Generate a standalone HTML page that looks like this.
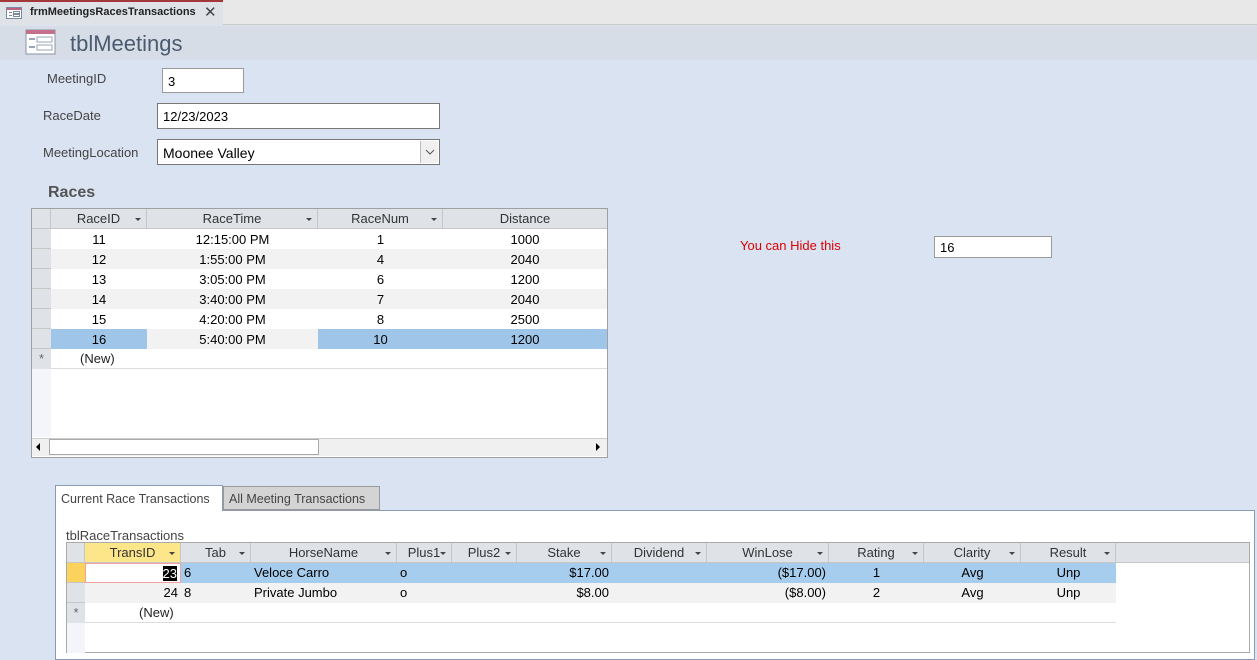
<!DOCTYPE html>
<html><head><style>
*{margin:0;padding:0;box-sizing:border-box}
body{width:1257px;height:653px;overflow:hidden;background:#dae3f2;font-family:"Liberation Sans",sans-serif;font-size:13px;color:#222;position:relative}
.a{position:absolute;white-space:nowrap}
.lbl{color:#444;font-size:13px}
.box{background:#fff;border:1px solid #9a9a9a;padding:3px 5px;font-size:13px;color:#000}
.c{position:absolute;white-space:nowrap;overflow:hidden;height:20px;line-height:20px;font-size:13px}
.h{background:#dfe3e8;border-right:1px solid #c6c6c6;border-bottom:1px solid #c6c6c6;text-align:center;color:#333}
.dd{position:absolute;right:5px;top:9px;border-left:3px solid transparent;border-right:3px solid transparent;border-top:3px solid #444}
.sel{background:#dfe3e8;border-bottom:1px solid #c6c6c6}
</style></head><body>
<div class="a" style="left:0;top:0;width:1257px;height:25px;background:#e8e8e8;border-bottom:1px solid #c8c8c8"></div>
<div class="a" style="left:0;top:0;width:223px;height:25px;background:#dfe3e8;border-top:2px solid #a4373a"></div>
<svg class="a" style="left:6px;top:7px" width="16" height="12"><rect x="0.5" y="0.5" width="15" height="11" fill="#fff" stroke="#7a8aa0"/><rect x="1" y="1" width="14" height="2" fill="#c06080"/><line x1="3" y1="5.5" x2="6" y2="5.5" stroke="#7a8aa0"/><rect x="7.5" y="4.5" width="6" height="2" fill="none" stroke="#7a8aa0"/><line x1="3" y1="8.5" x2="6" y2="8.5" stroke="#7a8aa0"/><rect x="7.5" y="7.5" width="6" height="2" fill="none" stroke="#7a8aa0"/></svg>
<div class="a" style="left:30px;top:6px;font-size:11px;font-weight:bold;color:#222">frmMeetingsRacesTransactions</div>
<div class="a" style="left:204px;top:3px;font-size:15px;color:#444">✕</div>
<div class="a" style="left:0;top:26px;width:1257px;height:34px;background:#d6dde7"></div>
<svg class="a" style="left:25px;top:29px" width="32" height="27"><rect x="1" y="1" width="29" height="24" fill="#fff" stroke="#8894a6"/><rect x="1" y="1" width="29" height="4" fill="#c4708c"/><line x1="4" y1="10" x2="10" y2="10" stroke="#9aa6b8" stroke-width="2"/><rect x="12" y="8" width="15" height="5" fill="none" stroke="#9aa6b8"/><line x1="4" y1="18" x2="10" y2="18" stroke="#9aa6b8" stroke-width="2"/><rect x="12" y="16" width="15" height="5" fill="none" stroke="#9aa6b8"/></svg>
<div class="a" style="left:70px;top:31px;font-size:22px;color:#4a5a70">tblMeetings</div>
<div class="a lbl" style="left:47px;top:71px">MeetingID</div>
<div class="a box" style="left:162px;top:68px;width:82px;height:25px;padding-top:5px">3</div>
<div class="a lbl" style="left:43px;top:108px">RaceDate</div>
<div class="a box" style="left:157px;top:103px;width:283px;height:26px;border-color:#777;padding-top:5px">12/23/2023</div>
<div class="a lbl" style="left:43px;top:145px">MeetingLocation</div>
<div class="a box" style="left:157px;top:139px;width:283px;height:26px;border-color:#777;font-size:14px;padding-top:5px">Moonee Valley</div>
<div class="a" style="left:420px;top:141px;width:18px;height:22px;background:#f0f0f0;border-left:1px solid #bbb"><svg width="18" height="22"><path d="M5 9 L9 13 L13 9" fill="none" stroke="#555"/></svg></div>
<div class="a" style="left:48px;top:184px;font-size:16px;font-weight:bold;color:#555">Races</div>
<div class="a" style="left:31px;top:208px;width:577px;height:250px;background:#fff;border:1px solid #a0a0a0"></div>
<div class="a" style="left:32px;top:209px;width:19px;height:228px;background:#f3f5fb"></div>
<div class="c h" style="left:32px;top:209px;width:19px"></div>
<div class="c h" style="left:51px;top:209px;width:96px">RaceID<i class="dd"></i></div>
<div class="c h" style="left:147px;top:209px;width:171px">RaceTime<i class="dd"></i></div>
<div class="c h" style="left:318px;top:209px;width:125px">RaceNum<i class="dd"></i></div>
<div class="c h" style="left:443px;top:209px;width:164px;border-right:0">Distance</div>
<div id="races"></div>
<div class="c" style="left:32px;top:349px;width:19px;background:#dfe3e8;text-align:center;color:#666">*</div>
<div class="c" style="left:51px;top:349px;width:556px;border-bottom:1px solid #ddd;padding-left:29px">(New)</div>
<div class="a" style="left:32px;top:438px;width:575px;height:18px;background:#f0f0f0;border-top:1px solid #ccc"></div>
<div class="a" style="left:49px;top:439px;width:270px;height:16px;background:#fff;border:1px solid #aaa"></div>
<div class="a" style="left:36px;top:443px;border-right:4px solid #000;border-top:4px solid transparent;border-bottom:4px solid transparent"></div>
<div class="a" style="left:596px;top:443px;border-left:4px solid #000;border-top:4px solid transparent;border-bottom:4px solid transparent"></div>
<div class="a" style="left:740px;top:238px;color:#d00;font-size:13px">You can Hide this</div>
<div class="a box" style="left:934px;top:236px;width:118px;height:22px;padding:3px 5px">16</div>
<div class="a" style="left:55px;top:510px;width:1200px;height:150px;background:#fff;border:1px solid #8a9ab0"></div>
<div class="a" style="left:55px;top:485px;width:168px;height:26px;background:#fff;border:1px solid #8a9ab0;border-bottom:0;padding:6px 5px;color:#444;font-size:12.5px">Current Race Transactions</div>
<div class="a" style="left:223px;top:486px;width:157px;height:24px;background:#d4d4d4;border:1px solid #999;padding:5px 5px;color:#444;font-size:12.5px">All Meeting Transactions</div>
<div class="a" style="left:66px;top:528px;color:#444">tblRaceTransactions</div>
<div class="a" style="left:66px;top:542px;width:1184px;height:111px;border:1px solid #aaa;background:#fff"></div>
<div class="a" style="left:67px;top:543px;width:18px;height:110px;background:#f3f5fb"></div>
<div id="tr"></div>
<script>
var r=[["11","12:15:00 PM","1","1000"],["12","1:55:00 PM","4","2040"],["13","3:05:00 PM","6","1200"],["14","3:40:00 PM","7","2040"],["15","4:20:00 PM","8","2500"],["16","5:40:00 PM","10","1200"]];
var cx=[[51,96],[147,171],[318,125],[443,164]],h="";
r.forEach(function(d,i){var y=229+i*20,bg=i%2?"#f2f2f2":"#fff";
h+='<div class="c sel" style="left:32px;top:'+y+'px;width:19px"></div>';
d.forEach(function(v,j){var b=bg;if(i==5&&j!=1)b="#9fc6e8";h+='<div class="c" style="left:'+cx[j][0]+'px;top:'+y+'px;width:'+cx[j][1]+'px;text-align:center;background:'+b+';color:#000;line-height:21px">'+v+'</div>';});});
document.getElementById("races").innerHTML=h;
var cols=[["TransID",85,96],["Tab",181,70],["HorseName",251,146],["Plus1",397,55],["Plus2",452,65],["Stake",517,95],["Dividend",612,95],["WinLose",707,122],["Rating",829,95],["Clarity",924,97],["Result",1021,95]];
h='<div class="c h" style="left:67px;top:543px;width:18px"></div>';
cols.forEach(function(c,i){h+='<div class="c h" style="left:'+c[1]+'px;top:543px;width:'+c[2]+'px;'+(i==0?'background:#fde58a;':'')+'">'+c[0]+'<i class="dd"></i></div>';});
h+='<div class="c" style="left:1116px;top:543px;width:133px;background:#dfe3e8;border-bottom:1px solid #c6c6c6"></div>';
var rows=[["23","6","Veloce Carro","o","","$17.00","","($17.00)","1","Avg","Unp"],["24","8","Private Jumbo","o","","$8.00","","($8.00)","2","Avg","Unp"]];
var al=["right","left","left","left","left","right","right","right","center","center","center"];
rows.forEach(function(d,i){var y=563+i*20,bg=i?"#f2f2f2":"#a6cdee";
h+='<div class="c" style="left:67px;top:'+y+'px;width:18px;background:'+(i?'#dfe3e8':'#fbd25c')+';border-bottom:1px solid #c6c6c6"></div>';
d.forEach(function(v,j){var b=bg,ex="";if(i==0&&j==0){b="#fff";ex="border:1px solid #f0a0a0;";v='<span style="background:#000;color:#fff">23</span>';}
h+='<div class="c" style="left:'+cols[j][1]+'px;top:'+y+'px;width:'+cols[j][2]+'px;background:'+b+';text-align:'+al[j]+';padding:0 3px;color:#000;'+ex+'">'+v+'</div>';});});
h+='<div class="c" style="left:67px;top:603px;width:18px;background:#dfe3e8;text-align:center;color:#666">*</div>';
h+='<div class="c" style="left:85px;top:603px;width:1031px;border-bottom:1px solid #ddd;padding-left:54px">(New)</div>';
document.getElementById("tr").innerHTML=h;
</script>
</body></html>
